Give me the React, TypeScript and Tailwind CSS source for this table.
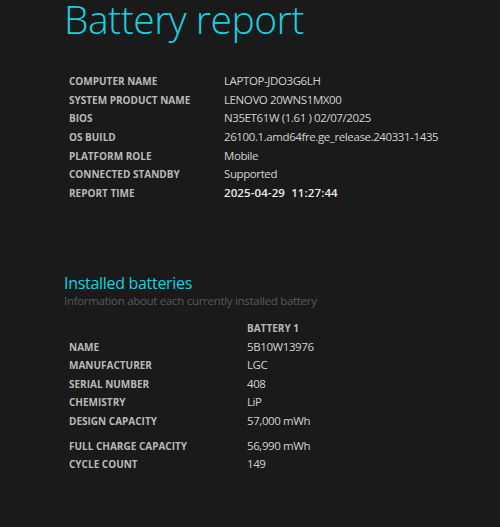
import React from 'react';

const sysInfo: [string, string][] = [
  ['COMPUTER NAME', 'LAPTOP-JDO3G6LH'],
  ['SYSTEM PRODUCT NAME', 'LENOVO 20WNS1MX00'],
  ['BIOS', 'N35ET61W (1.61 ) 02/07/2025'],
  ['OS BUILD', '26100.1.amd64fre.ge_release.240331-1435'],
  ['PLATFORM ROLE', 'Mobile'],
  ['CONNECTED STANDBY', 'Supported'],
];

const battery: [string, string][] = [
  ['NAME', '5B10W13976'],
  ['MANUFACTURER', 'LGC'],
  ['SERIAL NUMBER', '408'],
  ['CHEMISTRY', 'LiP'],
  ['DESIGN CAPACITY', '57,000 mWh'],
];

const Label = ({ children }: { children: React.ReactNode }) => (
  <span className="text-[10px] font-bold leading-[14px] text-[#b9b9b9]">{children}</span>
);

const Value = ({ children, strong }: { children: React.ReactNode; strong?: boolean }) => (
  <span
    className={
      strong
        ? 'text-[11.5px] font-semibold leading-[14px] tracking-[0.1px] text-[#ececec]'
        : 'text-[11.5px] leading-[14px] tracking-[-0.4px] text-[#d2d2d2]'
    }
  >
    {children}
  </span>
);

export default function App() {
  return (
    <div
      className="h-[527px] w-[500px] overflow-hidden bg-[#1a1a1a]"
      style={{ fontFamily: '"Open Sans", "Noto Sans", sans-serif' }}
    >
      <div className="pl-[64px]">
        <h1 className="text-[39px] font-[350] leading-[38px] tracking-[-0.5px] text-[#19d0e0]">
          Battery report
        </h1>

        {/* system info */}
        <div className="mt-[29px] pl-[5px]">
          {sysInfo.map(([k, v]) => (
            <div key={k} className="flex h-[18.67px] items-baseline">
              <div className="w-[155px]">
                <Label>{k}</Label>
              </div>
              <Value>{v}</Value>
            </div>
          ))}
          <div className="flex h-[18.67px] items-baseline">
            <div className="w-[155px]">
              <Label>REPORT TIME</Label>
            </div>
            <Value strong>2025-04-29&nbsp; 11:27:44</Value>
          </div>
        </div>

        {/* installed batteries */}
        <h2 className="mt-[75px] text-[16px] leading-[20px] tracking-[-0.3px] text-[#19d0e0]">
          Installed batteries
        </h2>
        <p className="text-[11.5px] leading-[16px] tracking-[-0.3px] text-[#595959]">
          Information about each currently installed battery
        </p>

        <div className="mt-[12px] pl-[5px]">
          <div className="flex h-[12px] items-baseline">
            <div className="w-[178px]" />
            <Label>BATTERY 1</Label>
          </div>
          {battery.map(([k, v]) => (
            <div key={k} className="flex h-[18.5px] items-baseline">
              <div className="w-[178px]">
                <Label>{k}</Label>
              </div>
              <Value>{v}</Value>
            </div>
          ))}
          <div className="mt-[6.5px] flex h-[18.5px] items-baseline">
            <div className="w-[178px]">
              <Label>FULL CHARGE CAPACITY</Label>
            </div>
            <Value>56,990 mWh</Value>
          </div>
          <div className="flex h-[18.5px] items-baseline">
            <div className="w-[178px]">
              <Label>CYCLE COUNT</Label>
            </div>
            <Value>149</Value>
          </div>
        </div>
      </div>
    </div>
  );
}
